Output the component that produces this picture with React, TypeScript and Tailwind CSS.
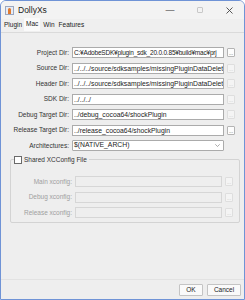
import { ReactNode } from "react";

const font = { fontFamily: '"Liberation Sans", "Noto Sans CJK JP", sans-serif' };

function Browse({ enabled }: { enabled?: boolean }) {
  return (
    <div
      className={`flex h-[9px] w-[8px] shrink-0 items-end justify-center rounded-[1px] border text-[5px] leading-[6px] ${
        enabled ? "border-[#b4b4b4] bg-[#fdfdfd] text-[#444]" : "border-[#dedede] bg-[#f4f4f4] text-[#c0c0c0]"
      }`}
    >
      ...
    </div>
  );
}

function Row({ label, children, enabled, browse = true, labelW = "w-[71px]" }: { label: string; children?: ReactNode; enabled?: boolean; browse?: boolean; labelW?: string }) {
  return (
    <div className="flex h-[11px] items-center">
      <div className={`${labelW} shrink-0 pr-[3px] text-right ${enabled === false ? "text-[#a0a0a0]" : "text-[#333]"}`}>{label}</div>
      {children}
      {browse && (
        <div className="ml-[3px]">
          <Browse enabled={enabled} />
        </div>
      )}
    </div>
  );
}

function Field({ value, disabled, tight }: { value?: string; disabled?: boolean; tight?: boolean }) {
  return (
    <div
      className={`h-[11px] min-w-0 flex-1 overflow-hidden whitespace-nowrap border px-[1px] leading-[9px] ${
        tight ? "text-[6.5px] tracking-[-0.2px]" : "text-[6.8px]"
      } ${disabled ? "border-[#d6d6d6] bg-[#eeeeee]" : "border-[#ababab] bg-white text-[#222]"}`}
    >
      {value}
    </div>
  );
}

export default function App() {
  const rows = [
    { label: "Project Dir:", value: "C:¥AdobeSDK¥plugin_sdk_20.0.0.85¥build¥mac¥prj", enabled: true, tight: true },
    { label: "Source Dir:", value: "../../../source/sdksamples/missingPluginDataDelet" },
    { label: "Header Dir:", value: "../../../source/sdksamples/missingPluginDataDelet" },
    { label: "SDK Dir:", value: "../../../" },
    { label: "Debug Target Dir:", value: "../debug_cocoa64/shockPlugin" },
    { label: "Release Target Dir:", value: "../release_cocoa64/shockPlugin", enabled: true },
  ];

  return (
    <div className="h-[300px] w-[245px] overflow-hidden text-[6.5px]" style={font}>
      <div className="flex h-full flex-col overflow-hidden rounded-t-[6px] border border-[#6f93d6] bg-[#eeeeee]">
        {/* title bar */}
        <div className="flex h-[18px] shrink-0 items-center bg-[#f3f3f3]">
          <div className="ml-[4px] flex h-[9px] w-[9px] items-end justify-center border border-[#9aa7c0] bg-[#e6ecf7]">
            <div className="h-[6px] w-[3px] rounded-t-full bg-[#e07a2f]" />
          </div>
          <span className="ml-[4px] text-[8.5px] text-[#222]">DollyXs</span>
          <div className="ml-auto flex items-center">
            <span className="w-[30px] text-center text-[9px] leading-none text-[#333]">—</span>
            <span className="flex w-[30px] justify-center">
              <span className="h-[6px] w-[6px] rounded-[1px] border border-[#c8c8c8]" />
            </span>
            <span className="flex w-[29px] justify-center">
              <svg width="7" height="7" viewBox="0 0 7 7">
                <path d="M0.5 0.5L6.5 6.5M6.5 0.5L0.5 6.5" stroke="#444" strokeWidth="0.9" />
              </svg>
            </span>
          </div>
        </div>
        {/* tabs */}
        <div className="flex h-[13px] shrink-0 items-end gap-[1px] bg-[#efefef] px-[2px] text-[#222]">
          <div className="px-[1px] pb-[2px]">Plugin</div>
          <div className="mb-[1px] rounded-t-[1px] bg-[#fafafa] px-[2px] pb-[2px] pt-[1px]">Mac</div>
          <div className="px-[2px] pb-[2px]">Win</div>
          <div className="px-[1px] pb-[2px]">Features</div>
        </div>
        <div className="flex min-h-0 flex-1 flex-col border-t border-[#dadada] bg-[#eeeeee]">
          <div className="flex flex-col gap-[4.5px] pr-[9px] pt-[14px]">
            {rows.map((r) => (
              <Row key={r.label} label={r.label} enabled={r.enabled}>
                <Field value={r.value} tight={r.tight} />
              </Row>
            ))}
            <Row label="Architectures:" browse={false}>
              <div className="mr-[11px] flex h-[11px] flex-1 items-center justify-between rounded-[1px] border border-[#ababab] bg-white px-[1px] pr-[3px] text-[6.8px] text-[#222]">
                <span>$(NATIVE_ARCH)</span>
                <svg width="5" height="3" viewBox="0 0 5 3">
                  <path d="M0.3 0.3L2.5 2.5L4.7 0.3" stroke="#888" strokeWidth="0.7" fill="none" />
                </svg>
              </div>
            </Row>
          </div>
          {/* group */}
          <div className="relative ml-[9px] mr-[4px] mt-[8px] rounded-[2px] border border-[#d3d3d3] pb-[4px]">
            <div className="absolute left-[3px] top-[-5px] flex items-center bg-[#eeeeee] pr-[2px] text-[#333]">
              <div className="h-[8px] w-[8px] border border-[#6a6a6a] bg-white" />
              <span className="ml-[2px]">Shared XCConfig File</span>
            </div>
            <div className="flex flex-col gap-[4.5px] pr-[6px] pt-[16px]">
              {["Main xconfig:", "Debug xconfig:", "Release xconfig:"].map((l) => (
                <Row key={l} label={l} enabled={false} labelW="w-[64px]">
                  <Field disabled />
                </Row>
              ))}
            </div>
          </div>
          <div className="flex-1" />
          <div className="border-t border-[#e2e2e2]" />
          <div className="flex h-[19px] items-center justify-end gap-[4px] pr-[3px]">
            <div className="flex h-[12px] w-[24px] items-center justify-center rounded-[1px] border border-[#c4c4c4] bg-[#fafafa] text-[#222]">OK</div>
            <div className="flex h-[12px] w-[34px] items-center justify-center rounded-[1px] border border-[#c4c4c4] bg-[#fafafa] text-[#222]">Cancel</div>
          </div>
        </div>
      </div>
    </div>
  );
}
